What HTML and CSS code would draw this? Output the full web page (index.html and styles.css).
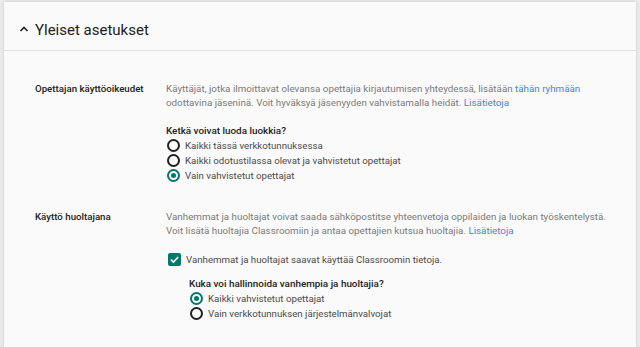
FILE: index.html
```html
<!DOCTYPE html>
<html lang="fi">
<head>
    <meta charset="UTF-8">
    <meta name="viewport" content="width=device-width, initial-scale=1.0">
    <title>Yleiset asetukset</title>
    <link rel="stylesheet" href="styles.css">
</head>
<body>
    <div class="card">
        <div class="card-header">
            <svg class="chevron" width="10" height="8" viewBox="0 0 10 8">
                <path d="M1.5 6 L5 2.5 L8.5 6" fill="none" stroke="#212121" stroke-width="1.6"/>
            </svg>
            <h1>Yleiset asetukset</h1>
        </div>

        <div class="card-body">
            <div class="setting">
                <div class="setting-label">Opettajan käyttöoikeudet</div>
                <div class="setting-content">
                    <p class="desc">Käyttäjät, jotka ilmoittavat olevansa opettajia kirjautumisen yhteydessä, lisätään <a href="#">tähän ryhmään</a> odottavina jäseninä. Voit hyväksyä jäsenyyden vahvistamalla heidät. <a href="#">Lisätietoja</a></p>

                    <div class="question">Ketkä voivat luoda luokkia?</div>
                    <label class="option"><span class="radio"></span>Kaikki tässä verkkotunnuksessa</label>
                    <label class="option"><span class="radio"></span>Kaikki odotustilassa olevat ja vahvistetut opettajat</label>
                    <label class="option"><span class="radio checked"></span>Vain vahvistetut opettajat</label>
                </div>
            </div>

            <div class="setting">
                <div class="setting-label">Käyttö huoltajana</div>
                <div class="setting-content">
                    <p class="desc">Vanhemmat ja huoltajat voivat saada sähköpostitse yhteenvetoja oppilaiden ja luokan työskentelystä. Voit lisätä huoltajia Classroomiin ja antaa opettajien kutsua huoltajia. <a href="#">Lisätietoja</a></p>

                    <label class="option check-option">
                        <span class="checkbox">
                            <svg width="13" height="13" viewBox="0 0 13 13">
                                <path d="M3 6.6 L5.4 9 L10.2 4" fill="none" stroke="#fff" stroke-width="1.6"/>
                            </svg>
                        </span>
                        Vanhemmat ja huoltajat saavat käyttää Classroomin tietoja.
                    </label>

                    <div class="sub-group">
                        <div class="question">Kuka voi hallinnoida vanhempia ja huoltajia?</div>
                        <label class="option"><span class="radio checked"></span>Kaikki vahvistetut opettajat</label>
                        <label class="option"><span class="radio"></span>Vain verkkotunnuksen järjestelmänvalvojat</label>
                    </div>
                </div>
            </div>
        </div>
    </div>
</body>
</html>
```

FILE: styles.css
```css
body {
    font-family: Roboto, "Liberation Sans", Arial, sans-serif;
    background-color: #e9e9e9;
    margin: 0;
    padding: 2px 4px 0 4px;
    height: 345px;
    overflow: hidden;
}

.card {
    background: #fafafa;
    box-shadow: 0 0 3px rgba(0, 0, 0, 0.12);
    height: 100%;
}

.card-header {
    display: flex;
    align-items: center;
    height: 41px;
    padding: 7px 0 0 15px;
    border-bottom: 1px solid #e0e0e0;
}

.chevron {
    margin-right: 6px;
    margin-top: -1px;
}

h1 {
    margin: 0;
    font-size: 15px;
    font-weight: 400;
    color: #212121;
}

.card-body {
    padding: 31px 0 0 31px;
}

.setting {
    display: grid;
    grid-template-columns: 131px 1fr;
    margin-bottom: 27px;
}

.setting-label {
    font-size: 9.7px;
    font-weight: 500;
    color: #212121;
    line-height: 14px;
}

.setting-content {
    padding-right: 22px;
}

.desc {
    margin: 0 0 14px 0;
    font-size: 9.8px;
    line-height: 14px;
    color: #7a7a7a;
}

    .desc a {
        color: #4285f4;
        text-decoration: none;
    }

.question {
    font-size: 9.9px;
    font-weight: 500;
    color: #212121;
    line-height: 14px;
}

.option {
    display: flex;
    align-items: center;
    height: 15px;
    font-size: 9.7px;
    color: #4a4a4a;
}

.radio {
    width: 9px;
    height: 9px;
    border: 2px solid #212121;
    border-radius: 50%;
    margin: 0 5px 0 1px;
    box-sizing: content-box;
    position: relative;
}

    .radio.checked {
        border-color: #00796b;
    }

        .radio.checked::after {
            content: "";
            position: absolute;
            left: 2px;
            top: 2px;
            width: 5px;
            height: 5px;
            border-radius: 50%;
            background: #00796b;
        }

.check-option {
    margin: 14px 0 10px 0;
}

.checkbox {
    width: 13px;
    height: 13px;
    background: #00796b;
    border-radius: 2px;
    margin: 0 5px 0 2px;
    display: flex;
}

.sub-group {
    padding-left: 23px;
}
```
